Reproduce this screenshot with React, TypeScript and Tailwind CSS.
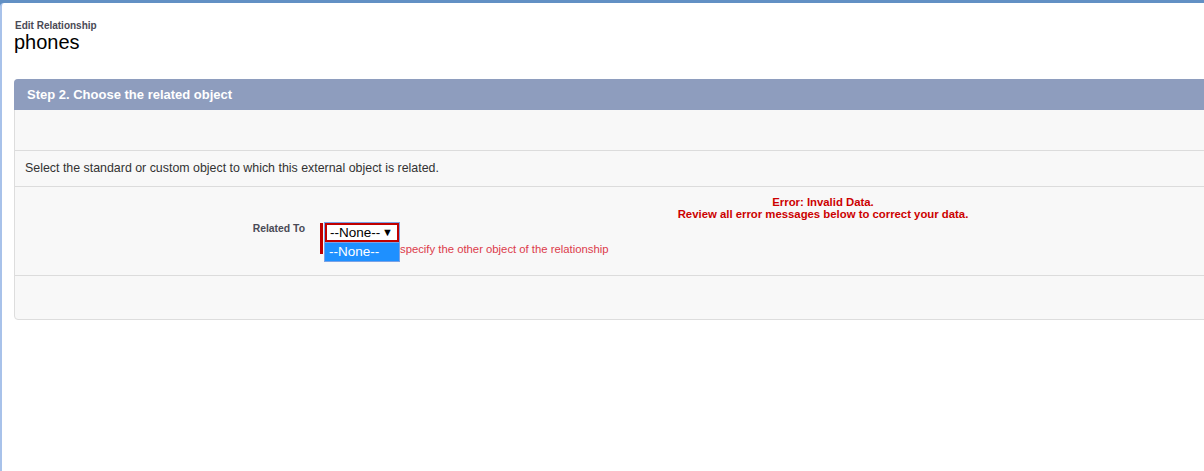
import React from "react";

export default function App() {
  return (
    <div className="w-[1204px] h-[471px] overflow-hidden bg-[#6290c4] pt-[3px] font-['Liberation_Sans',Arial,sans-serif]">
      <div className="h-full border-l-2 border-[#a8c2ea] bg-white rounded-tl-[4px] pl-[12px] pt-[17px]">
        <div className="pl-[1px] text-[10px] font-bold leading-[12px] text-[#4a4a56]">Edit Relationship</div>
        <div className="text-[20px] leading-[22px] text-[#000] -mt-[1px]">phones</div>

        <div className="mt-[26px] w-[1300px] rounded-[4px] border border-[#dddddd] bg-[#f8f8f8]">
          <div className="h-[31px] -mx-px -mt-px rounded-t-[4px] bg-[#8e9dbe] pl-[13px] flex items-center text-[13px] font-bold text-white">
            Step 2. Choose the related object
          </div>
          <div className="h-[41px] border-b border-[#dcdcdc]" />
          <div className="h-[36px] border-b border-[#dcdcdc] pl-[10px] flex items-center text-[12.4px] text-[#333]">
            Select the standard or custom object to which this external object is related.
          </div>
          <div className="h-[89px] border-b border-[#dcdcdc] pt-[9px]">
            <div className="ml-[638px] w-[340px] text-center text-[11.35px] font-bold leading-[12px] text-[#cc0000]">
              <div>Error: Invalid Data.</div>
              <div>Review all error messages below to correct your data.</div>
            </div>
            <div className="flex mt-[2px]">
              <div className="w-[290px] text-right pt-[1px] text-[10.4px] font-bold leading-[12px] text-[#4a4a56]">Related To</div>
              <div className="ml-[15px] flex">
                <div className="w-[3px] h-[31px] mt-[1px] bg-[#c00000]" />
                <div className="ml-[1px]">
                  <div className="relative">
                    <div className="w-[76px] h-[21px] border border-[#7aa2e6] bg-white">
                      <div className="h-full border-2 border-[#c00000] flex items-center justify-between pl-[3px] pr-[4px] text-[13.5px] leading-none text-black">
                        <span>--None--</span>
                        <span className="text-[11px]">▼</span>
                      </div>
                    </div>
                    <div className="absolute left-0 top-[21px] w-[76px] h-[19px] bg-[#1e90ff] border border-[#7aa2e6] border-t-0 flex items-center pl-[4px] text-[13.5px] text-white">
                      --None--
                    </div>
                  </div>
                  <div className="ml-[76px] text-[11.3px] leading-[13px] text-[#dc3b4b]">
                    specify the other object of the relationship
                  </div>
                </div>
              </div>
            </div>
          </div>
          <div className="h-[43px]" />
        </div>
      </div>
    </div>
  );
}
